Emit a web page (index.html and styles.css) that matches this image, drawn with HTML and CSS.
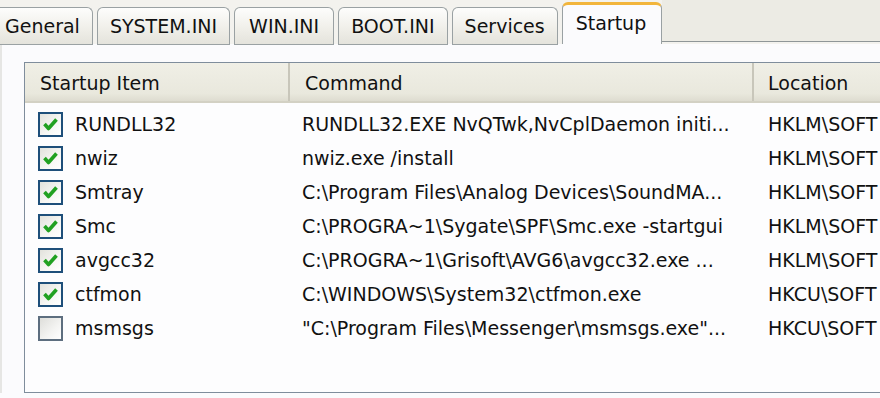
FILE: index.html
```html
<!DOCTYPE html>
<html lang="en">
<head>
  <meta charset="UTF-8">
  <title>System Configuration Utility - Startup</title>
  <link rel="stylesheet" href="styles.css">
</head>
<body>

  <div class="tab-strip">
    <div class="tab tab-first">General</div>
    <div class="tab">SYSTEM.INI</div>
    <div class="tab tab-win">WIN.INI</div>
    <div class="tab">BOOT.INI</div>
    <div class="tab">Services</div>
    <div class="tab active">Startup</div>
    <div class="tab-rest"></div>
  </div>

  <div class="tab-pane">
    <div class="list-view">
      <div class="list-head">
        <div class="col col-item">Startup Item</div>
        <div class="col col-cmd">Command</div>
        <div class="col col-loc">Location</div>
      </div>

      <div class="list-body" id="listBody"></div>
    </div>
  </div>

  <script>
    const items = [
      { name: "RUNDLL32", cmd: "RUNDLL32.EXE NvQTwk,NvCplDaemon initi...", loc: "HKLM\\SOFT", on: true },
      { name: "nwiz", cmd: "nwiz.exe /install", loc: "HKLM\\SOFT", on: true },
      { name: "Smtray", cmd: "C:\\Program Files\\Analog Devices\\SoundMA...", loc: "HKLM\\SOFT", on: true },
      { name: "Smc", cmd: "C:\\PROGRA~1\\Sygate\\SPF\\Smc.exe -startgui", loc: "HKLM\\SOFT", on: true },
      { name: "avgcc32", cmd: "C:\\PROGRA~1\\Grisoft\\AVG6\\avgcc32.exe ...", loc: "HKLM\\SOFT", on: true },
      { name: "ctfmon", cmd: "C:\\WINDOWS\\System32\\ctfmon.exe", loc: "HKCU\\SOFT", on: true },
      { name: "msmsgs", cmd: "\"C:\\Program Files\\Messenger\\msmsgs.exe\"...", loc: "HKCU\\SOFT", on: false }
    ];

    const body = document.getElementById("listBody");
    const tick = '<svg viewBox="0 0 21 21" width="21" height="21"><path d="M4.5 10 L8.5 14.5 L16.5 5.5" fill="none" stroke="#21a121" stroke-width="3.6" stroke-linejoin="round"/></svg>';

    items.forEach(item => {
      const row = document.createElement("div");
      row.className = "list-row";
      row.innerHTML =
        '<div class="col col-item"><span class="check' + (item.on ? '' : ' off') + '">' + (item.on ? tick : '') + '</span>' + item.name + '</div>' +
        '<div class="col col-cmd">' + item.cmd + '</div>' +
        '<div class="col col-loc">' + item.loc + '</div>';
      body.appendChild(row);
    });
  </script>

</body>
</html>
```

FILE: styles.css
```css
body {
  margin: 0;
  font-family: "DejaVu Sans", Verdana, sans-serif;
  font-size: 19px;
  color: #111;
  background: #fbfbfd;
  overflow: hidden;
}

.tab-strip {
  display: flex;
  align-items: flex-end;
  height: 44px;
  background: #f3f2ee;
}

.tab {
  height: 37px;
  line-height: 37px;
  padding: 0 12px;
  margin-right: 4px;
  border: 1px solid #9aa1a3;
  border-bottom: none;
  border-radius: 6px 6px 0 0;
  background: linear-gradient(#fdfdfc, #efeee8 60%, #e4e3dc);
  box-sizing: border-box;
  white-space: nowrap;
  box-shadow: 0 1px 0 #9aa1a3;
}

.tab-first {
  margin-left: -8px;
}

.tab-win {
  padding: 0 14px;
}

.tab.active {
  height: 42px;
  line-height: 36px;
  margin-right: 0;
  padding: 0 15px 0 13px;
  background: #fbfbfd;
  border-top: 3px solid #f2b53c;
  box-shadow: none;
}

.tab-rest {
  flex: 1;
  align-self: flex-start;
  height: 42px;
  background: #ecebe4;
  border-bottom: 1px solid #8f9698;
  box-sizing: border-box;
}

.tab-pane {
  padding: 18px 0 0 22px;
  border-left: 2px solid #e6e6e4;
}

.list-view {
  height: 331px;
  border: 1px solid #7f8d9c;
  border-right: none;
  box-sizing: border-box;
  background: #fdfdfe;
}

.list-head {
  display: flex;
  height: 40px;
  line-height: 40px;
  background: linear-gradient(#f0efe6, #e9e8dd 80%, #dedcd0);
  border-bottom: 2px solid #d3d1c4;
  box-sizing: border-box;
}

.list-head .col {
  border-right: 2px solid #c8c6ba;
  box-sizing: border-box;
}

.list-head .col-loc {
  border-right: none;
}

.col {
  flex: none;
  white-space: nowrap;
  overflow: hidden;
}

.col-item {
  width: 265px;
  padding-left: 15px;
  box-sizing: border-box;
}

.col-cmd {
  width: 464px;
  padding-left: 15px;
  box-sizing: border-box;
}

.col-loc {
  flex: 1;
  padding-left: 14px;
  box-sizing: border-box;
}

.list-body {
  padding-top: 4px;
}

.list-row {
  display: flex;
  height: 34px;
  line-height: 34px;
}

.list-row .col-item {
  display: flex;
  align-items: center;
  padding-left: 13px;
}

.list-row .col-cmd {
  padding-left: 12px;
}

.check {
  display: inline-flex;
  align-items: center;
  justify-content: center;
  width: 25px;
  height: 25px;
  margin-right: 12px;
  border: 2px solid #1e4f7a;
  box-sizing: border-box;
  background: linear-gradient(135deg, #e2e2dc, #f7f7f4 60%, #ffffff);
}

.check.off {
  border-color: #5d6e7f;
  background: linear-gradient(135deg, #dededa, #f4f4f2 60%, #ffffff);
}
```
